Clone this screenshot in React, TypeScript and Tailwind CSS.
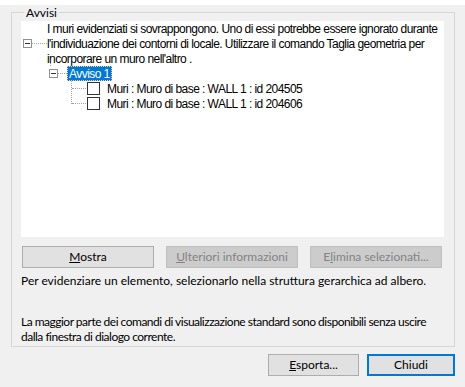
import React from "react";

const ui = "font-['Lato',sans-serif] text-[12px] text-black";
const tree = "font-['Liberation_Sans',Arial,sans-serif] text-[12px] tracking-[-0.55px] text-black";

function MinusBox() {
  return (
    <span className="flex h-[9px] w-[9px] shrink-0 items-center justify-center border border-[#919191] bg-white">
      <span className="h-px w-[5px] bg-[#333]" />
    </span>
  );
}

function Btn({
  children,
  disabled,
  primary,
  className = "",
}: {
  children: React.ReactNode;
  disabled?: boolean;
  primary?: boolean;
  className?: string;
}) {
  let look = "border border-[#adadad] bg-[#e1e1e1] text-black";
  if (disabled) look = "border border-[#bfbfbf] bg-[#cccccc] text-[#838383]";
  if (primary) look = "border-2 border-[#0078d7] bg-[#e1e1e1] text-black";
  return (
    <button className={`flex h-[22px] items-center justify-center whitespace-nowrap ${look} ${className}`}>
      {children}
    </button>
  );
}

function ChildRow({ label }: { label: string }) {
  return (
    <div className="flex h-[15px] items-center">
      <span className="w-[14px] border-t border-dotted border-[#a0a0a0]" />
      <span className="ml-[1px] h-[13px] w-[13px] border border-[#333] bg-white" />
      <span className="ml-[7px]">{label}</span>
    </div>
  );
}

export default function App() {
  return (
    <div className={`h-[387px] w-[465px] bg-[#f0f0f0] ${ui}`}>
      <fieldset className="ml-[11px] mt-[5px] h-[342px] w-[444px] border border-[#d6d6d6] px-[9px] pt-px">
        <legend className="ml-[3px] px-[2px] leading-[15px]">Avvisi</legend>

        <div className={`h-[216px] w-[423px] whitespace-nowrap bg-white pl-[2px] ${tree}`}>
          {/* nodo principale */}
          <div className="flex">
            <div className="flex w-[24px] shrink-0 items-center self-start pt-[18px]">
              <MinusBox />
              <span className="w-[15px] border-t border-dotted border-[#a0a0a0]" />
            </div>
            <p className="pt-[1px] leading-[15px]">
              I muri evidenziati si sovrappongono. Uno di essi potrebbe essere ignorato durante
              <br />
              l'individuazione dei contorni di locale. Utilizzare il comando Taglia geometria per
              <br />
              incorporare un muro nell'altro .
            </p>
          </div>

          <div className="ml-[26px] -mt-[4px]">
            <div className="ml-[1px] h-[3px] w-px border-l border-dotted border-[#a0a0a0]" />
            <div className="flex h-[15px] items-center">
              <MinusBox />
              <span className="w-[9px] border-t border-dotted border-[#a0a0a0]" />
              <span className="flex h-[15px] items-center border border-dotted border-[#ffd27a] bg-[#0078d7] px-[1px] text-white">
                Avviso 1
              </span>
            </div>
            <div className="ml-[22px] h-[23px] border-l border-dotted border-[#a0a0a0]">
              <ChildRow label="Muri : Muro di base : WALL 1 : id 204505" />
              <ChildRow label="Muri : Muro di base : WALL 1 : id 204606" />
            </div>
          </div>
        </div>

        <div className="mt-[9px] flex gap-[12px] pl-px">
          <Btn className="w-[132px]">
            <span><u>M</u>ostra</span>
          </Btn>
          <Btn disabled className="w-[132px]">
            <span><u>U</u>lteriori informazioni</span>
          </Btn>
          <Btn disabled className="w-[132px]">
            <span>E<u>l</u>imina selezionati...</span>
          </Btn>
        </div>

        <p className="mt-[5px] whitespace-nowrap leading-[15px]">
          Per evidenziare un elemento, selezionarlo nella struttura gerarchica ad albero.
        </p>
        <p className="mt-[26px] whitespace-nowrap leading-[15px] tracking-[-0.5px]">
          La maggior parte dei comandi di visualizzazione standard sono disponibili senza uscire
          <br />
          dalla finestra di dialogo corrente.
        </p>
      </fieldset>

      <div className="mt-[7px] flex justify-end gap-[8px] pr-[10px]">
        <Btn className="w-[91px]">
          <span><u>E</u>sporta...</span>
        </Btn>
        <Btn primary className="w-[88px]">
          Chiudi
        </Btn>
      </div>
    </div>
  );
}
